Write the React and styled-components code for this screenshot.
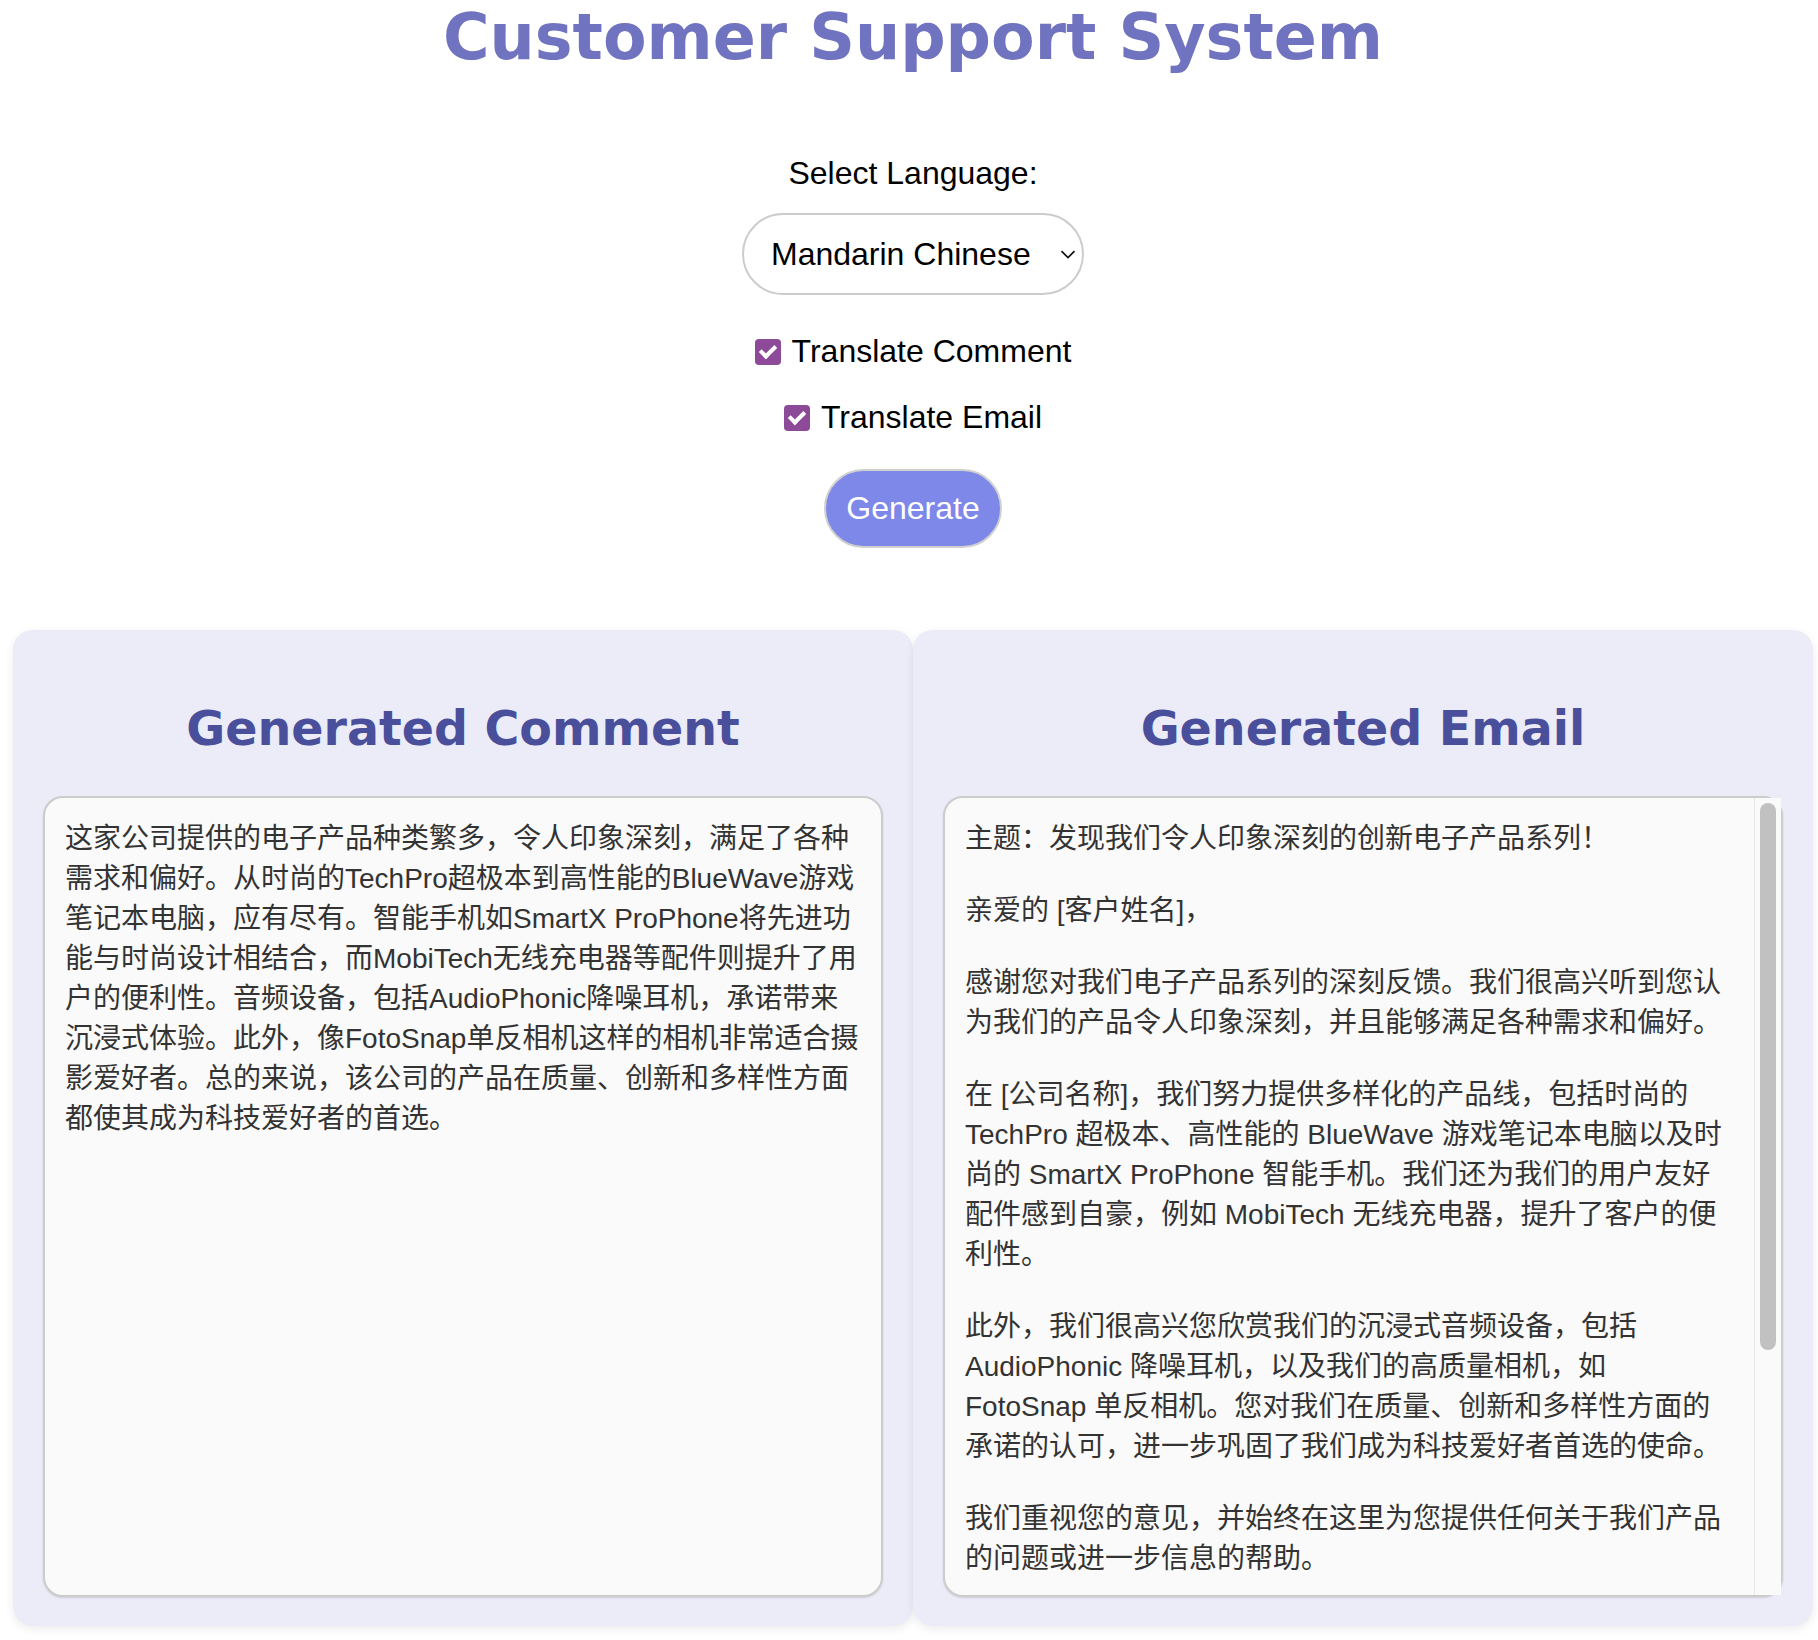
import React from 'react';
import styled, { createGlobalStyle } from 'styled-components';

const GlobalStyle = createGlobalStyle`
  html, body { margin: 0; padding: 0; background: #ffffff; }
  body { font-family: "Liberation Sans", Arial, "Noto Sans CJK SC", sans-serif; }
`;

const Page = styled.div`
  width: 1818px;
  box-sizing: border-box;
  padding-left: 8px;
  padding-bottom: 12px;
`;

const Controls = styled.section`
  display: flex;
  flex-direction: column;
  align-items: center;
`;

const Title = styled.h1`
  margin: 0;
  font-family: "DejaVu Sans", Verdana, sans-serif;
  font-weight: bold;
  font-size: 63.5px;
  line-height: 75px;
  color: #7073bf;
  text-align: center;
`;

const FieldLabel = styled.label`
  margin-top: 80px;
  font-size: 32px;
  line-height: 37px;
  color: #000;
`;

const SelectWrap = styled.div`
  position: relative;
  margin-top: 21px;
`;

const Select = styled.select`
  appearance: none;
  -webkit-appearance: none;
  display: block;
  width: 342px;
  height: 82px;
  box-sizing: border-box;
  border: 2px solid #cccccc;
  border-radius: 41px;
  background: #ffffff;
  font-family: "Liberation Sans", Arial, sans-serif;
  font-size: 32px;
  color: #000;
  padding: 0 50px 0 27px;
  outline: none;
`;

const Chevron = styled.svg`
  position: absolute;
  right: 8px;
  top: 37px;
  pointer-events: none;
`;

const CheckRow = styled.label`
  display: flex;
  align-items: center;
  gap: 11px;
  margin-top: ${(p) => p.$top}px;
  font-size: 32px;
  line-height: 37px;
  color: #000;
`;

const Checkbox = styled.input`
  appearance: none;
  -webkit-appearance: none;
  position: relative;
  width: 26px;
  height: 26px;
  margin: 0;
  border-radius: 4px;
  background: #8d4a98;
  &::after {
    content: '';
    position: absolute;
    left: 8px;
    top: 3px;
    width: 6px;
    height: 12px;
    border: solid #ffffff;
    border-width: 0 4px 4px 0;
    transform: rotate(45deg);
  }
`;

const GenerateButton = styled.button`
  margin-top: 33px;
  padding: 19px 20px;
  border: 2px solid #d0d0d0;
  border-radius: 40px;
  background: #7e88e8;
  color: #ffffff;
  font-family: "Liberation Sans", Arial, sans-serif;
  font-size: 32px;
  line-height: 37px;
`;

const PanelRow = styled.div`
  display: flex;
  margin-top: 82px;
  padding: 0 5px;
`;

const Panel = styled.section`
  flex: 1;
  min-width: 0;
  background: #ecebf8;
  border-radius: 20px;
  padding: 31px 30px 29px;
  box-shadow: 0 3px 10px rgba(0, 0, 0, 0.08);
`;

const PanelHeading = styled.h2`
  margin: 40px 0 39px;
  font-family: "DejaVu Sans", Verdana, sans-serif;
  font-weight: bold;
  font-size: 47.5px;
  line-height: 56px;
  color: #4a4f9c;
  text-align: center;
`;

const TextBox = styled.div`
  position: relative;
  height: 801px;
  box-sizing: border-box;
  border: 2px solid #cccccc;
  border-radius: 20px;
  background: #fafafa;
  font-family: "Liberation Sans", Arial, "Noto Sans CJK SC", sans-serif;
  font-size: 28px;
  line-height: 40px;
  color: #333333;
  box-shadow: 0 1px 2px rgba(0, 0, 0, 0.12);
`;

const TextScroll = styled.div`
  height: 100%;
  box-sizing: border-box;
  padding: 21px ${(p) => (p.$scroll ? 47 : 20)}px 19px 20px;
  border-radius: 18px;
  overflow-x: hidden;
  overflow-y: ${(p) => (p.$scroll ? 'auto' : 'hidden')};
  scrollbar-width: none;
  &::-webkit-scrollbar {
    display: none;
  }
`;

const ScrollTrack = styled.div`
  position: absolute;
  top: 0;
  right: 0;
  bottom: 0;
  width: 27px;
  box-sizing: border-box;
  background: #fafafa;
  border-left: 1px solid #e6e6e6;
  pointer-events: none;
`;

const ScrollThumb = styled.div`
  position: absolute;
  top: 5px;
  left: 5px;
  width: 16px;
  height: 547px;
  border-radius: 8px;
  background: #c1c1c1;
`;

const Para = styled.p`
  margin: 0 0 ${(p) => (p.$last ? 0 : 32)}px;
  white-space: nowrap;
`;

const commentLines = [
  '这家公司提供的电子产品种类繁多，令人印象深刻，满足了各种',
  '需求和偏好。从时尚的TechPro超极本到高性能的BlueWave游戏',
  '笔记本电脑，应有尽有。智能手机如SmartX ProPhone将先进功',
  '能与时尚设计相结合，而MobiTech无线充电器等配件则提升了用',
  '户的便利性。音频设备，包括AudioPhonic降噪耳机，承诺带来',
  '沉浸式体验。此外，像FotoSnap单反相机这样的相机非常适合摄',
  '影爱好者。总的来说，该公司的产品在质量、创新和多样性方面',
  '都使其成为科技爱好者的首选。',
];

const emailParas = [
  ['主题：发现我们令人印象深刻的创新电子产品系列！'],
  ['亲爱的 [客户姓名]，'],
  [
    '感谢您对我们电子产品系列的深刻反馈。我们很高兴听到您认',
    '为我们的产品令人印象深刻，并且能够满足各种需求和偏好。',
  ],
  [
    '在 [公司名称]，我们努力提供多样化的产品线，包括时尚的',
    'TechPro 超极本、高性能的 BlueWave 游戏笔记本电脑以及时',
    '尚的 SmartX ProPhone 智能手机。我们还为我们的用户友好',
    '配件感到自豪，例如 MobiTech 无线充电器，提升了客户的便',
    '利性。',
  ],
  [
    '此外，我们很高兴您欣赏我们的沉浸式音频设备，包括',
    'AudioPhonic 降噪耳机，以及我们的高质量相机，如',
    'FotoSnap 单反相机。您对我们在质量、创新和多样性方面的',
    '承诺的认可，进一步巩固了我们成为科技爱好者首选的使命。',
  ],
  [
    '我们重视您的意见，并始终在这里为您提供任何关于我们产品',
    '的问题或进一步信息的帮助。',
  ],
  ['再次感谢您的宝贵反馈，我们期待继续为您服务。'],
  ['此致，'],
  ['[您的姓名]', '[您的职位]', '[公司名称]', '[联系方式]'],
];

const Lines = ({ lines }) =>
  lines.map((l, i) => (
    <React.Fragment key={i}>
      {l}
      {i < lines.length - 1 && <br />}
    </React.Fragment>
  ));

export default function App() {
  return (
    <Page>
      <GlobalStyle />
      <Controls>
        <Title>Customer Support System</Title>
        <FieldLabel htmlFor="lang">Select Language:</FieldLabel>
        <SelectWrap>
          <Select id="lang" defaultValue="zh">
            <option value="en">English</option>
            <option value="zh">Mandarin Chinese</option>
            <option value="es">Spanish</option>
          </Select>
          <Chevron width="16" height="9" viewBox="0 0 16 9">
            <path d="M1.5 1.2 L8 7.6 L14.5 1.2" fill="none" stroke="#111" strokeWidth="1.7" />
          </Chevron>
        </SelectWrap>
        <CheckRow $top={38}>
          <Checkbox type="checkbox" defaultChecked />
          Translate Comment
        </CheckRow>
        <CheckRow $top={29}>
          <Checkbox type="checkbox" defaultChecked />
          Translate Email
        </CheckRow>
        <GenerateButton type="button">Generate</GenerateButton>
      </Controls>
      <PanelRow>
        <Panel>
          <PanelHeading>Generated Comment</PanelHeading>
          <TextBox>
            <TextScroll>
              <Para $last>
                <Lines lines={commentLines} />
              </Para>
            </TextScroll>
          </TextBox>
        </Panel>
        <Panel>
          <PanelHeading>Generated Email</PanelHeading>
          <TextBox>
            <TextScroll $scroll>
              {emailParas.map((p, i) => (
                <Para key={i} $last={i === emailParas.length - 1}>
                  <Lines lines={p} />
                </Para>
              ))}
            </TextScroll>
            <ScrollTrack>
              <ScrollThumb />
            </ScrollTrack>
          </TextBox>
        </Panel>
      </PanelRow>
    </Page>
  );
}
